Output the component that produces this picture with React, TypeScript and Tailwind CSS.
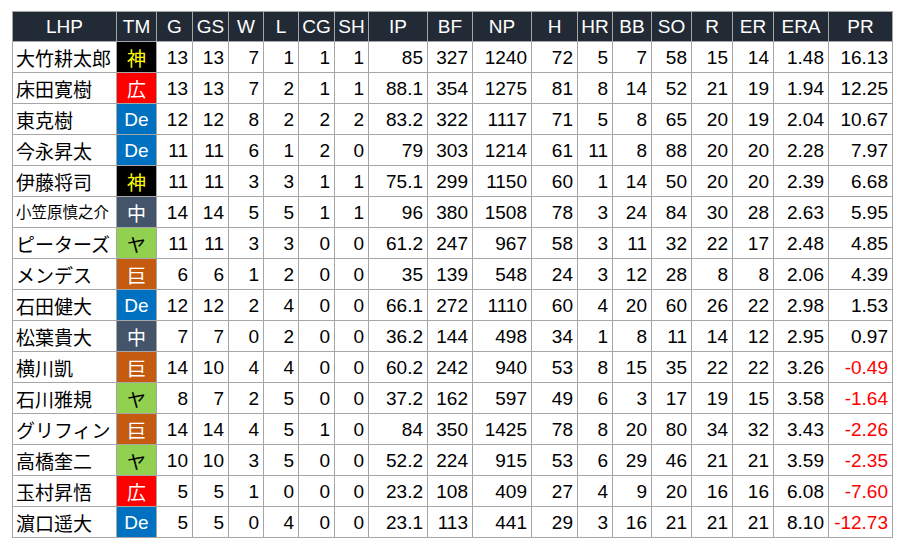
import React from "react";

type Row = [string, string, ...(string | number)[]];

const rows: Row[] = [
  ["大竹耕太郎", "神", 13, 13, 7, 1, 1, 1, "85", 327, 1240, 72, 5, 7, 58, 15, 14, "1.48", "16.13"],
  ["床田寛樹", "広", 13, 13, 7, 2, 1, 1, "88.1", 354, 1275, 81, 8, 14, 52, 21, 19, "1.94", "12.25"],
  ["東克樹", "De", 12, 12, 8, 2, 2, 2, "83.2", 322, 1117, 71, 5, 8, 65, 20, 19, "2.04", "10.67"],
  ["今永昇太", "De", 11, 11, 6, 1, 2, 0, "79", 303, 1214, 61, 11, 8, 88, 20, 20, "2.28", "7.97"],
  ["伊藤将司", "神", 11, 11, 3, 3, 1, 1, "75.1", 299, 1150, 60, 1, 14, 50, 20, 20, "2.39", "6.68"],
  ["小笠原慎之介", "中", 14, 14, 5, 5, 1, 1, "96", 380, 1508, 78, 3, 24, 84, 30, 28, "2.63", "5.95"],
  ["ピーターズ", "ヤ", 11, 11, 3, 3, 0, 0, "61.2", 247, 967, 58, 3, 11, 32, 22, 17, "2.48", "4.85"],
  ["メンデス", "巨", 6, 6, 1, 2, 0, 0, "35", 139, 548, 24, 3, 12, 28, 8, 8, "2.06", "4.39"],
  ["石田健大", "De", 12, 12, 2, 4, 0, 0, "66.1", 272, 1110, 60, 4, 20, 60, 26, 22, "2.98", "1.53"],
  ["松葉貴大", "中", 7, 7, 0, 2, 0, 0, "36.2", 144, 498, 34, 1, 8, 11, 14, 12, "2.95", "0.97"],
  ["横川凱", "巨", 14, 10, 4, 4, 0, 0, "60.2", 242, 940, 53, 8, 15, 35, 22, 22, "3.26", "-0.49"],
  ["石川雅規", "ヤ", 8, 7, 2, 5, 0, 0, "37.2", 162, 597, 49, 6, 3, 17, 19, 15, "3.58", "-1.64"],
  ["グリフィン", "巨", 14, 14, 4, 5, 1, 0, "84", 350, 1425, 78, 8, 20, 80, 34, 32, "3.43", "-2.26"],
  ["高橋奎二", "ヤ", 10, 10, 3, 5, 0, 0, "52.2", 224, 915, 53, 6, 29, 46, 21, 21, "3.59", "-2.35"],
  ["玉村昇悟", "広", 5, 5, 1, 0, 0, 0, "23.2", 108, 409, 27, 4, 9, 20, 16, 16, "6.08", "-7.60"],
  ["濵口遥大", "De", 5, 5, 0, 4, 0, 0, "23.1", 113, 441, 29, 3, 16, 21, 21, 21, "8.10", "-12.73"],
];

const headers = ["LHP", "TM", "G", "GS", "W", "L", "CG", "SH", "IP", "BF", "NP", "H", "HR", "BB", "SO", "R", "ER", "ERA", "PR"];
const widths = [104, 40, 36, 36, 35, 35, 36, 34, 59, 45, 59, 46, 35, 39, 40, 41, 41, 55, 64];

const teamClass: Record<string, string> = {
  "神": "bg-[#000000] text-[#ffff00]",
  "広": "bg-[#ff0000] text-white",
  "De": "bg-[#0070c0] text-white",
  "中": "bg-[#44546a] text-white",
  "ヤ": "bg-[#92d050] text-black",
  "巨": "bg-[#c55a11] text-white",
};

const font = { fontFamily: '"Liberation Sans", Arial, "Noto Sans CJK JP", sans-serif' };

export default function App() {
  return (
    <div className="w-[909px] h-[551px] bg-white pt-[11px] pl-[12px]" style={font}>
      <table className="table-fixed border-collapse text-[19px] leading-none text-black">
        <colgroup>
          {widths.map((w, i) => (
            <col key={i} style={{ width: w }} />
          ))}
        </colgroup>
        <thead>
          <tr className="h-[30px]">
            {headers.map((h) => (
              <th
                key={h}
                className="border border-[#a6a6a6] bg-[#222b35] text-white font-normal text-center p-0"
              >
                {h}
              </th>
            ))}
          </tr>
        </thead>
        <tbody>
          {rows.map((r) => {
            const [name, team, ...nums] = r;
            const small = name.length >= 6;
            return (
              <tr key={name} className="h-[31px]">
                <td
                  className={`border border-[#a6a6a6] pl-[3px] pr-0 py-0 whitespace-nowrap overflow-hidden ${small ? "text-[15.5px]" : "text-[19px]"}`}
                  style={{ fontFamily: '"Noto Sans CJK JP", sans-serif' }}
                >
                  {name}
                </td>
                <td
                  className={`border border-[#a6a6a6] text-center p-0 ${teamClass[team]}`}
                  style={team === "De" ? font : { fontFamily: '"Noto Sans CJK JP", sans-serif' }}
                >
                  {team}
                </td>
                {nums.map((n, i) => {
                  const neg = typeof n === "string" && n.startsWith("-");
                  return (
                    <td
                      key={i}
                      className={`border border-[#a6a6a6] text-right pr-[4px] pl-0 py-0 whitespace-nowrap ${neg ? "text-[#ff0000]" : ""}`}
                    >
                      {n}
                    </td>
                  );
                })}
              </tr>
            );
          })}
        </tbody>
      </table>
    </div>
  );
}
